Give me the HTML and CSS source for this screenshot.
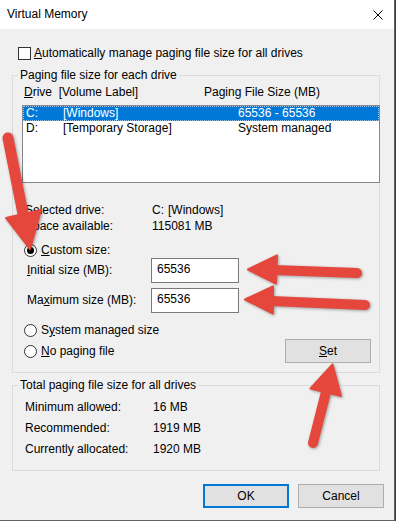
FILE: index.html
```html
<!DOCTYPE html>
<html lang="en">
<head>
    <meta charset="UTF-8">
    <title>Virtual Memory</title>
    <link rel="stylesheet" href="styles.css">
</head>
<body>
    <div class="window">
        <div class="titlebar">
            <span class="title">Virtual Memory</span>
            <svg class="close" viewBox="0 0 10 10"><path d="M0.5 0.5L9.5 9.5M9.5 0.5L0.5 9.5" stroke="#000" stroke-width="1"/></svg>
        </div>

        <div class="content">
            <div class="auto-row">
                <span class="checkbox"></span>
                <span><u>A</u>utomatically manage paging file size for all drives</span>
            </div>

            <fieldset class="group drives">
                <legend>Paging file size for each drive</legend>
                <div class="list-head">
                    <span class="head-drive"><u>D</u>rive&nbsp; [Volume Label]</span>
                    <span>Paging File Size (MB)</span>
                </div>
                <div class="drive-list">
                    <div class="drive-row selected">
                        <span class="c1">C:</span><span class="c2">[Windows]</span><span>65536 - 65536</span>
                    </div>
                    <div class="drive-row">
                        <span class="c1">D:</span><span class="c2">[Temporary Storage]</span><span>System managed</span>
                    </div>
                </div>

                <div class="info">
                    <span>Selected drive:</span><span><span class="drive-letter">C:</span>[Windows]</span>
                    <span>Space available:</span><span>115081 MB</span>
                </div>

                <div class="radio-row custom-row">
                    <span class="radio checked"></span>
                    <span><u>C</u>ustom size:</span>
                </div>
                <div class="size-row">
                    <label for="initial"><u>I</u>nitial size (MB):</label>
                    <input id="initial" type="text" value="65536">
                </div>
                <div class="size-row second">
                    <label for="maximum">Ma<u>x</u>imum size (MB):</label>
                    <input id="maximum" type="text" value="65536">
                </div>
                <div class="radio-row system-row">
                    <span class="radio"></span>
                    <span>S<u>y</u>stem managed size</span>
                </div>
                <div class="bottom-row">
                    <div class="radio-row">
                        <span class="radio"></span>
                        <span><u>N</u>o paging file</span>
                    </div>
                    <button class="btn set-btn"><u>S</u>et</button>
                </div>
            </fieldset>

            <fieldset class="group totals">
                <legend>Total paging file size for all drives</legend>
                <div class="totals-grid">
                    <span>Minimum allowed:</span><span>16 MB</span>
                    <span>Recommended:</span><span>1919 MB</span>
                    <span>Currently allocated:</span><span>1920 MB</span>
                </div>
            </fieldset>

            <div class="buttons">
                <button class="btn default">OK</button>
                <button class="btn">Cancel</button>
            </div>
        </div>

        <!-- red annotation arrows drawn over the dialog -->
        <svg class="arrows" viewBox="0 0 395 521">
            <g fill="#e5473d" stroke="#e5473d" stroke-linejoin="round" stroke-linecap="round">
                <line x1="8" y1="138" x2="23" y2="214" stroke-width="11"/>
                <polygon points="6,218 41,210 30,249" stroke-width="2"/>

                <line x1="274" y1="270" x2="357" y2="273" stroke-width="10"/>
                <polygon points="248,269.5 277,255.5 276,283.5" stroke-width="2"/>

                <line x1="271" y1="301" x2="365" y2="305" stroke-width="10"/>
                <polygon points="245,299.5 273,286.5 273,313.5" stroke-width="2"/>

                <line x1="326" y1="392" x2="313" y2="443" stroke-width="10"/>
                <polygon points="332.5,364.5 310.5,388.5 341,396" stroke-width="2"/>
            </g>
        </svg>
    </div>
</body>
</html>
```

FILE: styles.css
```css
* {
    margin: 0;
    padding: 0;
    box-sizing: border-box;
}

body {
    background: #3c3c3c;
    font-family: "Liberation Sans", Arial, sans-serif;
    font-size: 12px;
    line-height: 15px;
    color: #000;
}

.window {
    position: relative;
    width: 395px;
    height: 521px;
    background: #f0f0f0;
    border-right: 1px solid #626262;
    border-bottom: 1px solid #626262;
    overflow: hidden;
}

.titlebar {
    height: 29px;
    background: #fff;
    display: flex;
    align-items: center;
    padding: 0 11px 0 7px;
}

.close {
    margin-left: auto;
    width: 10px;
    height: 10px;
}

.content {
    padding-top: 17px;
}

.auto-row {
    display: flex;
    align-items: center;
    gap: 3px;
    height: 15px;
    margin-left: 18px;
}

.checkbox {
    width: 13px;
    height: 13px;
    border: 1px solid #333;
    background: #fff;
}

.group {
    width: 368px;
    margin: 7px 0 0 12px;
    border: 1px solid #dcdcdc;
    min-width: 0;
}

.group legend {
    margin-left: 5px;
    padding: 0 2px;
}

.drives {
    padding-bottom: 9px;
}

.list-head {
    display: flex;
    margin: 2px 0 0 11px;
}

.head-drive {
    width: 180px;
}

.drive-list {
    margin: 5px 0 0 9px;
    width: 358px;
    height: 78px;
    border: 1px solid #828790;
    background: #fff;
}

.drive-row {
    display: flex;
    height: 15px;
    padding-left: 3px;
    white-space: nowrap;
}

.drive-row .c1 {
    width: 37px;
}

.drive-row .c2 {
    width: 175px;
}

.drive-row.selected {
    background: #0078d7;
    color: #fff;
    outline: 1px dotted #9cc8ee;
    outline-offset: -1px;
}

.info {
    display: grid;
    grid-template-columns: 127px auto;
    row-gap: 1px;
    margin: 20px 0 0 12px;
}

.drive-letter {
    margin-right: 4px;
}

.radio-row {
    display: flex;
    align-items: center;
    gap: 4px;
    height: 15px;
    margin-left: 11px;
}

.custom-row {
    margin-top: 9px;
}

.radio {
    width: 13px;
    height: 13px;
    border: 1px solid #333;
    border-radius: 50%;
    background: #fff;
    display: flex;
    align-items: center;
    justify-content: center;
}

.radio.checked::after {
    content: "";
    width: 7px;
    height: 7px;
    border-radius: 50%;
    background: #000;
}

.size-row {
    display: flex;
    align-items: center;
    height: 25px;
    margin-left: 14px;
}

.size-row.second {
    margin-top: 5px;
}

.size-row label {
    width: 124px;
}

.size-row input {
    width: 88px;
    height: 25px;
    border: 1px solid #7a7a7a;
    background: #fff;
    font: inherit;
    color: #000;
    padding: 0 0 4px 5px;
    outline: none;
}

.system-row {
    margin-top: 10px;
}

.bottom-row {
    display: flex;
    align-items: center;
    height: 24px;
    margin-top: 1px;
    padding-right: 8px;
}

.btn {
    width: 86px;
    height: 24px;
    background: #e1e1e1;
    border: 1px solid #adadad;
    font: inherit;
    color: #000;
}

.set-btn {
    margin-left: auto;
}

.totals {
    margin-top: 5px;
    padding-bottom: 13px;
}

.totals-grid {
    display: grid;
    grid-template-columns: 128px auto;
    row-gap: 6px;
    margin: 7px 0 0 12px;
}

.buttons {
    display: flex;
    justify-content: flex-end;
    gap: 9px;
    margin-top: 13px;
    padding-right: 10px;
}

.btn.default {
    border: 2px solid #0078d7;
}

.arrows {
    position: absolute;
    top: 0;
    left: 0;
    width: 395px;
    height: 521px;
    pointer-events: none;
    filter: drop-shadow(1px 1px 1.5px rgba(0, 0, 0, 0.35));
}
```
